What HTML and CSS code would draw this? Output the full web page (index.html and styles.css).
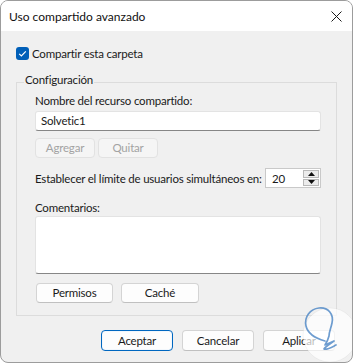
FILE: index.html
```html
<!DOCTYPE html>
<html lang="es">
<head>
  <meta charset="UTF-8" />
  <meta name="viewport" content="width=device-width, initial-scale=1.0" />
  <title>Uso compartido avanzado</title>
  <link rel="stylesheet" href="styles.css">
</head>
<body>
  <div class="ventana">
    <!-- Barra de titulo -->
    <div class="titulo">
      <span>Uso compartido avanzado</span>
      <svg class="cerrar" width="11" height="11" viewBox="0 0 11 11">
        <path d="M0.5 0.5 L10.5 10.5 M10.5 0.5 L0.5 10.5" stroke="#1a1a1a" stroke-width="1" fill="none" />
      </svg>
    </div>

    <div class="cuerpo">
      <label class="check-fila">
        <span class="check">
          <svg width="13" height="13" viewBox="0 0 13 13">
            <path d="M3.2 6.8 L5.4 9 L9.8 4.4" stroke="#fff" stroke-width="1.2" fill="none" />
          </svg>
        </span>
        Compartir esta carpeta
      </label>

      <fieldset class="grupo">
        <legend>Configuración</legend>

        <label class="etiqueta">Nombre del recurso compartido:</label>
        <div class="campo-texto">Solvetic1</div>

        <div class="fila-botones fila-agregar">
          <button class="btn btn-off ancho-60">Agregar</button>
          <button class="btn btn-off ancho-60">Quitar</button>
        </div>

        <div class="fila-limite">
          <span>Establecer el límite de usuarios simultáneos en:</span>
          <div class="spinner">
            <span class="spin-valor">20</span>
            <div class="spin-flechas">
              <span class="spin-btn">
                <svg width="7" height="4" viewBox="0 0 7 4"><path d="M0 4 L3.5 0 L7 4 Z" fill="#111" /></svg>
              </span>
              <span class="spin-btn">
                <svg width="7" height="4" viewBox="0 0 7 4"><path d="M0 0 L3.5 4 L7 0 Z" fill="#111" /></svg>
              </span>
            </div>
          </div>
        </div>

        <label class="etiqueta comentarios">Comentarios:</label>
        <div class="area"></div>

        <div class="fila-botones fila-permisos">
          <button class="btn ancho-77">Permisos</button>
          <button class="btn ancho-78">Caché</button>
        </div>
      </fieldset>

      <div class="acciones">
        <button class="btn btn-principal ancho-72">Aceptar</button>
        <button class="btn ancho-72">Cancelar</button>
        <button class="btn ancho-72">Aplicar</button>
      </div>
    </div>

    <!-- marca de agua -->
    <svg class="marca" width="62" height="60" viewBox="0 0 62 60">
      <circle cx="36" cy="30" r="27" fill="#ffffff" fill-opacity="0.7" stroke="#000" stroke-opacity="0.04" />
      <path d="M31 36 C24 34 14 30 12 21 C10 12 16 4 25 3 C34 2 40 9 38 18 C37 23 35 27 35 31 C34 35 33 37 31 40 L40 36 C36 39 31 42 30 44 C33 45 38 42 42 40"
            stroke="#4a84c4" stroke-opacity="0.8" stroke-width="1.7" fill="none" stroke-linecap="round" stroke-linejoin="round" />
    </svg>
  </div>
</body>
</html>
```

FILE: styles.css
```css
body {
  font-family: 'Segoe UI', Lato, sans-serif;
  font-size: 11.5px;
  letter-spacing: -0.2px;
  margin: 0;
  background: #ffffff;
  color: #1a1a1a;
  overflow: hidden;
}

.ventana {
  position: relative;
  width: 353px;
  height: 363px;
  box-sizing: border-box;
  border: 1px solid #9c9c9c;
  border-radius: 8px;
  background: #f0f0f0;
  overflow: hidden;
}

.titulo {
  height: 30px;
  background: #ffffff;
  display: flex;
  align-items: center;
  justify-content: space-between;
  padding: 0 10px 0 8px;
  font-size: 12px;
  letter-spacing: 0;
  color: #111;
}

.cerrar {
  margin-top: 1px;
}

.cuerpo {
  padding: 16px 15px 0 15px;
}

.check-fila {
  display: flex;
  align-items: center;
  gap: 3px;
  height: 13px;
  line-height: 13px;
}

.check {
  width: 13px;
  height: 13px;
  border-radius: 3px;
  background: #005fb8;
  display: flex;
}

.grupo {
  margin: 12px 0 0 0;
  border: 1px solid #dcdcdc;
  padding: 1px 15px 12px 18px;
}

.grupo legend {
  line-height: 16px;
  padding: 0 1px 4px 1px;
  margin-left: -11px;
}

.etiqueta {
  display: block;
  line-height: 16px;
}

.campo-texto {
  margin-top: 2px;
  height: 20px;
  box-sizing: border-box;
  background: #fff;
  border: 1px solid #e3e3e3;
  border-bottom-color: #868686;
  border-radius: 3px;
  padding: 0 5px;
  line-height: 18px;
}

.fila-botones {
  display: flex;
}

.fila-agregar {
  margin-top: 7px;
  gap: 3px;
}

.fila-permisos {
  margin-top: 9px;
  gap: 8px;
  padding-left: 1px;
}

.btn {
  font-family: inherit;
  font-size: 11.5px;
  letter-spacing: -0.2px;
  height: 20px;
  padding: 0;
  background: #fdfdfd;
  border: 1px solid #d4d4d4;
  border-bottom-color: #c0c0c0;
  border-radius: 4px;
  color: #1a1a1a;
  line-height: 18px;
}

.btn-off {
  background: #f5f5f5;
  border-color: #e2e2e2;
  color: #a3a3a3;
}

.ancho-60 { width: 60px; }
.ancho-72 { width: 72px; }
.ancho-77 { width: 77px; }
.ancho-78 { width: 78px; }

.fila-limite {
  margin-top: 10px;
  display: flex;
  align-items: center;
  justify-content: space-between;
  white-space: nowrap;
}

.spinner {
  width: 56px;
  height: 20px;
  flex-shrink: 0;
  box-sizing: border-box;
  background: #fff;
  border: 1px solid #c9c9c9;
  display: flex;
  justify-content: space-between;
}

.spin-valor {
  padding-left: 6px;
  line-height: 19px;
}

.spin-flechas {
  display: flex;
  flex-direction: column;
  width: 16px;
  padding: 1px;
  gap: 1px;
}

.spin-btn {
  flex: 1;
  background: #ececec;
  border: 1px solid #b9b9b9;
  display: flex;
  align-items: center;
  justify-content: center;
}

.comentarios {
  margin-top: 13px;
  line-height: 14px;
}

.area {
  margin-top: 1px;
  height: 58px;
  box-sizing: border-box;
  background: #fff;
  border: 1px solid #e3e3e3;
  border-bottom-color: #868686;
  border-radius: 3px;
}

.acciones {
  margin-top: 14px;
  display: flex;
  justify-content: flex-end;
  gap: 9px;
  padding-right: 2px;
}

.acciones .btn {
  height: 21px;
}

.btn-principal {
  border: 1px solid #0067c0;
  box-shadow: inset 0 0 0 1px #f2f7fc;
}

.marca {
  position: absolute;
  left: 293px;
  top: 304px;
}
```
